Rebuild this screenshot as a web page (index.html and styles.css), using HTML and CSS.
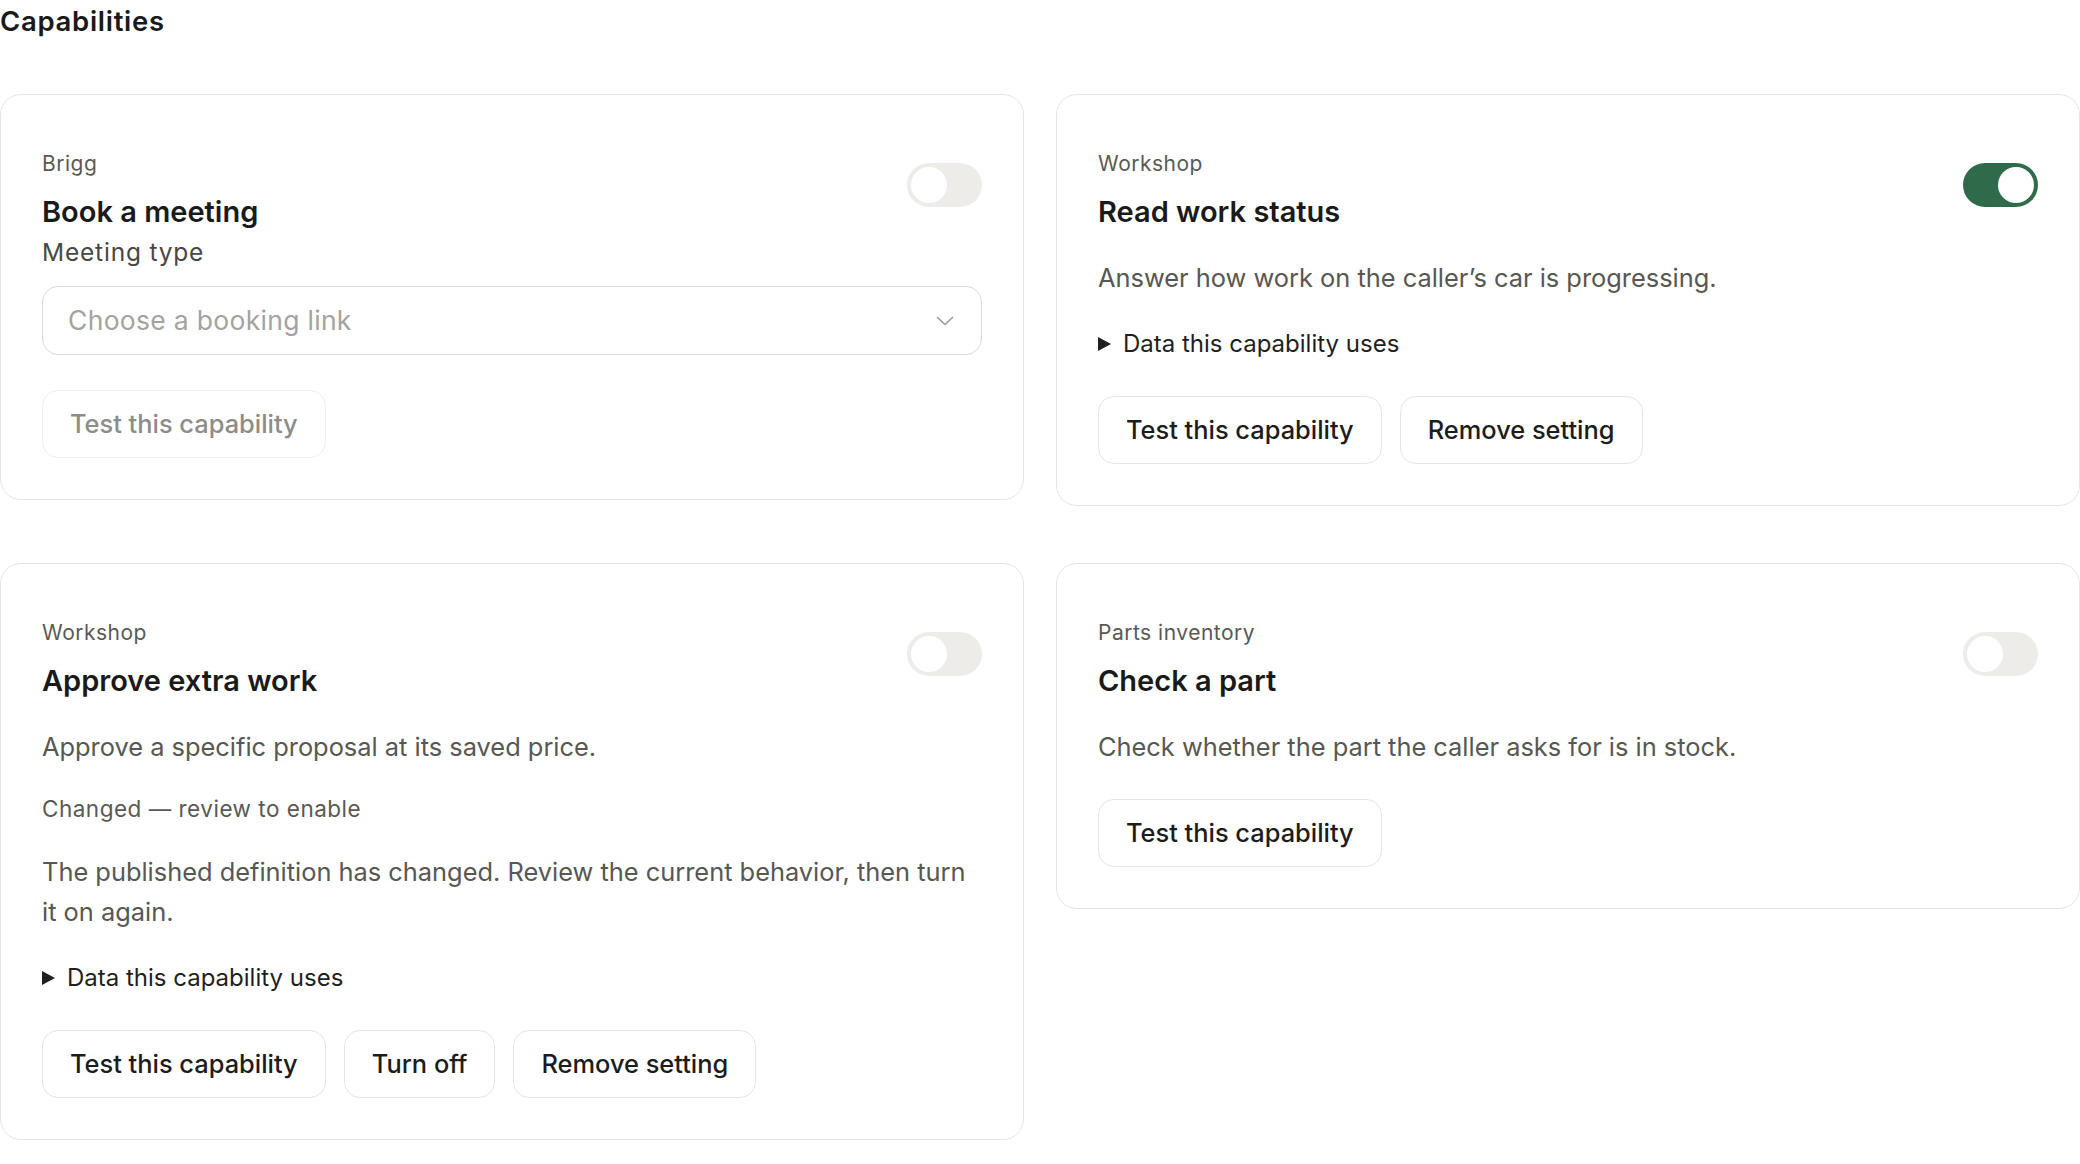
FILE: index.html
```html
<!DOCTYPE html>
<html lang="en">
<head>
  <meta charset="UTF-8">
  <meta name="viewport" content="width=device-width, initial-scale=1">
  <title>Capabilities</title>
  <link rel="stylesheet" href="styles.css">
</head>

<body>

  <h1 class="page-title">Capabilities</h1>

  <div class="cap-grid">

    <section class="cap-card">
      <div class="cap-head">
        <div>
          <div class="cap-source">Brigg</div>
          <h2 class="cap-name">Book a meeting</h2>
        </div>
        <button class="switch" role="switch" aria-checked="false" aria-label="Book a meeting"><span class="knob"></span></button>
      </div>
      <label class="field-label" for="meeting-type">Meeting type</label>
      <div class="select-wrap">
        <select id="meeting-type" class="select">
          <option value="" selected disabled>Choose a booking link</option>
        </select>
        <svg class="chevron" width="18" height="10" viewBox="0 0 18 10" fill="none" stroke="currentColor" stroke-width="1.6" stroke-linecap="round" stroke-linejoin="round"><path d="M1.5 1.5L9 8.5L16.5 1.5"/></svg>
      </div>
      <div class="cap-actions">
        <button class="btn" disabled>Test this capability</button>
      </div>
    </section>

    <section class="cap-card">
      <div class="cap-head">
        <div>
          <div class="cap-source">Workshop</div>
          <h2 class="cap-name">Read work status</h2>
        </div>
        <button class="switch on" role="switch" aria-checked="true" aria-label="Read work status"><span class="knob"></span></button>
      </div>
      <p class="cap-desc">Answer how work on the caller’s car is progressing.</p>
      <details class="cap-data">
        <summary>Data this capability uses</summary>
      </details>
      <div class="cap-actions">
        <button class="btn">Test this capability</button>
        <button class="btn">Remove setting</button>
      </div>
    </section>

    <section class="cap-card">
      <div class="cap-head">
        <div>
          <div class="cap-source">Workshop</div>
          <h2 class="cap-name">Approve extra work</h2>
        </div>
        <button class="switch" role="switch" aria-checked="false" aria-label="Approve extra work"><span class="knob"></span></button>
      </div>
      <p class="cap-desc">Approve a specific proposal at its saved price.</p>
      <p class="cap-status">Changed — review to enable</p>
      <p class="cap-desc">The published definition has changed. Review the current behavior, then turn it on again.</p>
      <details class="cap-data">
        <summary>Data this capability uses</summary>
      </details>
      <div class="cap-actions">
        <button class="btn">Test this capability</button>
        <button class="btn">Turn off</button>
        <button class="btn">Remove setting</button>
      </div>
    </section>

    <section class="cap-card">
      <div class="cap-head">
        <div>
          <div class="cap-source">Parts inventory</div>
          <h2 class="cap-name">Check a part</h2>
        </div>
        <button class="switch" role="switch" aria-checked="false" aria-label="Check a part"><span class="knob"></span></button>
      </div>
      <p class="cap-desc">Check whether the part the caller asks for is in stock.</p>
      <div class="cap-actions">
        <button class="btn">Test this capability</button>
      </div>
    </section>

  </div>

</body>
</html>
```

FILE: styles.css
```css
* {
  margin: 0;
  padding: 0;
  box-sizing: border-box;
}

body {
  background: #fff;
  color: #1c1c1c;
  font-family: Inter, 'Noto Sans', sans-serif;
}

.page-title {
  font-size: 27.5px;
  font-weight: 600;
  letter-spacing: 0.7px;
  line-height: 42px;
  margin-bottom: 52px;
  color: #1a1a1a;
}

.cap-grid {
  display: grid;
  grid-template-columns: 1fr 1fr;
  column-gap: 32px;
  row-gap: 57px;
  align-items: start;
}

.cap-card {
  border: 1px solid #e6e5e0;
  border-radius: 21px;
  padding: 53px 41px 41px;
  display: flex;
  flex-direction: column;
}

.cap-head {
  display: flex;
  justify-content: space-between;
  align-items: flex-start;
}

.cap-source {
  font-size: 21px;
  letter-spacing: 0.5px;
  line-height: 32px;
  color: #595955;
}

.cap-name {
  font-size: 29px;
  font-weight: 600;
  line-height: 38px;
  margin-top: 12.5px;
  color: #1a1a1a;
}

.switch {
  width: 75px;
  height: 44px;
  margin-top: 15px;
  border: none;
  border-radius: 22px;
  background: #edece8;
  padding: 0 4px;
  display: flex;
  align-items: center;
  justify-content: flex-start;
  cursor: pointer;
}

.switch.on {
  background: #2f6b4b;
  justify-content: flex-end;
}

.knob {
  width: 36px;
  height: 36px;
  border-radius: 50%;
  background: #fff;
}

.field-label {
  display: block;
  margin-top: 3px;
  font-size: 24.5px;
  letter-spacing: 0.8px;
  line-height: 36px;
  color: #474744;
}

.select-wrap {
  position: relative;
  margin-top: 16px;
}

.select {
  width: 100%;
  height: 69px;
  appearance: none;
  -webkit-appearance: none;
  border: 1px solid #dcdbd6;
  border-radius: 16px;
  background: #fff;
  padding: 0 64px 0 25px;
  font-family: inherit;
  font-size: 26.5px;
  letter-spacing: 0.3px;
  color: #a3a3a0;
}

.chevron {
  position: absolute;
  right: 28px;
  top: 30px;
  color: #9a9a97;
  pointer-events: none;
}

.cap-desc {
  margin-top: 27px;
  font-size: 25.4px;
  line-height: 40px;
  color: #575753;
}

.cap-head + .cap-desc {
  margin-top: 27.5px;
}

.cap-status {
  margin-top: 26px;
  font-size: 22.5px;
  letter-spacing: 0.5px;
  line-height: 32px;
  color: #595955;
}

.cap-data {
  margin-top: 26px;
  font-size: 24px;
  line-height: 40px;
  color: #1f1f1f;
}

.cap-data summary {
  list-style: none;
  display: flex;
  align-items: center;
  gap: 12px;
  cursor: pointer;
}

.cap-data summary::-webkit-details-marker {
  display: none;
}

.cap-data summary::before {
  content: "";
  border-left: 13px solid #1f1f1f;
  border-top: 7px solid transparent;
  border-bottom: 7px solid transparent;
}

.cap-actions {
  margin-top: 32px;
  display: flex;
  gap: 18px;
}

.select-wrap + .cap-actions {
  margin-top: 35px;
}

.btn {
  padding: 15px 27px;
  border: 1px solid #e6e5e0;
  border-radius: 16px;
  background: #fff;
  font-family: inherit;
  font-size: 25.4px;
  font-weight: 500;
  line-height: 36px;
  color: #1c1c1c;
  cursor: pointer;
}

.btn:disabled {
  border-color: #f0efeb;
  color: #8c8c89;
  cursor: default;
}
```
